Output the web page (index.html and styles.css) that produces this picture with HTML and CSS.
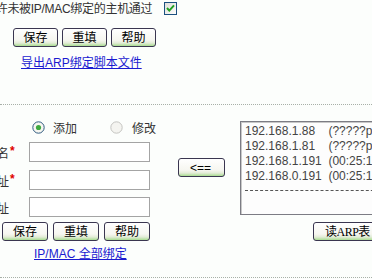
FILE: index.html
```html
<!DOCTYPE html>
<html>
<head>
<meta charset="utf-8">
<link rel="stylesheet" href="styles.css">
</head>
<body>
<div class="page">
  <div class="top">
    <div class="allow">
      <span class="allow-text">允许未被IP/MAC绑定的主机通过</span>
      <span class="chk"><svg width="13" height="13" viewBox="0 0 13 13"><defs><linearGradient id="cg" x1="0" y1="0" x2="1" y2="1"><stop offset="0" stop-color="#dcdcd6"/><stop offset="1" stop-color="#ffffff"/></linearGradient></defs><rect x="0.5" y="0.5" width="12" height="12" fill="url(#cg)" stroke="#1c5180"/><path d="M3 6 L5.3 8.6 L10 3.4" fill="none" stroke="#21a121" stroke-width="2"/></svg></span>
    </div>
    <div class="btns btns-top">
      <button class="btn">保存</button>
      <button class="btn">重填</button>
      <button class="btn">帮助</button>
    </div>
    <a class="link link-top" href="#">导出ARP绑定脚本文件</a>
  </div>
  <div class="lower">
    <div class="form">
      <div class="radios">
        <span class="radio"><svg width="13" height="13" viewBox="0 0 13 13"><circle cx="6.5" cy="6.5" r="5.7" fill="#f6f6f0" stroke="#2f5a80"/><circle cx="6.5" cy="6.5" r="2.6" fill="#3faa3f"/></svg></span>
        <span class="rlabel">添加</span>
        <span class="radio radio-off"><svg width="13" height="13" viewBox="0 0 13 13"><circle cx="6.5" cy="6.5" r="5.7" fill="#f4f4f0" stroke="#c4c4c0"/></svg></span>
        <span class="rlabel">修改</span>
      </div>
      <div class="field field-1"><div class="lbl"><span class="lt">主机名</span><span class="req">*</span></div><div class="inp"></div></div>
      <div class="field field-2"><div class="lbl"><span class="lt">IP地址</span><span class="req">*</span></div><div class="inp"></div></div>
      <div class="field field-3"><div class="lbl"><span class="lt">MAC地址</span></div><div class="inp"></div></div>
      <div class="btns btns-bottom">
        <button class="btn">保存</button>
        <button class="btn">重填</button>
        <button class="btn">帮助</button>
      </div>
      <a class="link link-bottom" href="#">IP/MAC 全部绑定</a>
    </div>
    <div class="mid">
      <button class="btn btn-arrow">&lt;==</button>
    </div>
    <div class="right">
      <div class="list">
        <div class="opt">192.168.1.88    (?????pc)</div>
        <div class="opt">192.168.1.81    (?????pc)</div>
        <div class="opt">192.168.1.191  (00:25:11:2a:3b:4c)</div>
        <div class="opt">192.168.0.191  (00:25:11:5d:6e:7f)</div>
        <div class="sep"></div>
      </div>
      <button class="btn btn-read">读ARP表</button>
    </div>
  </div>
  <div class="bottom-rule"></div>
</div>
</body>
</html>
```
FILE: styles.css
```css
html, body {
  margin: 0;
  padding: 0;
}
body {
  width: 372px;
  height: 279px;
  overflow: hidden;
  background: #fcfefc;
  font-family: "Liberation Sans", "Noto Sans CJK SC", sans-serif;
  font-size: 12px;
  color: #333;
}
.page {
  width: 372px;
  overflow: hidden;
}
.top {
  height: 104px;
  box-sizing: border-box;
}
.allow {
  display: flex;
  align-items: center;
  height: 17px;
  margin-left: -16px;
  white-space: nowrap;
}
.allow-text {
  line-height: 16px;
  letter-spacing: -0.3px;
}
.chk {
  display: flex;
  margin-left: 12px;
}
.btns {
  display: flex;
}
.btns-top {
  margin-top: 11px;
  padding-left: 13px;
  gap: 4px;
}
.btn {
  box-sizing: border-box;
  width: 45px;
  height: 19px;
  padding: 0;
  margin: 0;
  border: 1px solid #3a3650;
  border-radius: 3px;
  background: linear-gradient(#ffffff 0%, #f6f6f0 65%, #e4ecd8 82%, #a8dc90 100%);
  font-family: "Liberation Sans", "Noto Sans CJK SC", sans-serif;
  font-size: 12px;
  line-height: 16px;
  color: #000;
  text-align: center;
}
.link {
  display: block;
  width: max-content;
  line-height: 14px;
  color: #1a1ad0;
  text-decoration: underline;
}
.link-top {
  margin-top: 9px;
  margin-left: 21px;
}
.lower {
  display: flex;
  height: 173px;
  box-sizing: border-box;
  border-top: 1px dotted #a8b0a8;
}
.form {
  width: 172px;
  flex: none;
}
.radios {
  display: flex;
  align-items: center;
  height: 18px;
  margin-top: 13px;
  padding-left: 32px;
}
.radio {
  display: flex;
}
.rlabel {
  margin-left: 8px;
  color: #333;
}
.radio-off {
  margin-left: 33px;
}
.radio-off + .rlabel {
  margin-left: 9px;
}
.field {
  display: flex;
  align-items: center;
  height: 20px;
}
.field-1 { margin-top: 6px; }
.field-2 { margin-top: 8px; }
.field-3 { margin-top: 7px; }
.lbl {
  width: 29px;
  flex: none;
  display: flex;
  align-items: center;
  white-space: nowrap;
}
.lt {
  width: 9px;
  flex: none;
  display: flex;
  justify-content: flex-end;
  white-space: nowrap;
  color: #333;
}
.req {
  color: #e00000;
  font-size: 12px;
  font-weight: bold;
  margin-left: 1px;
  position: relative;
  top: -1px;
}
.inp {
  box-sizing: border-box;
  width: 121px;
  height: 20px;
  border: 1px solid #a4a4a4;
  background: #ffffff;
}
.btns-bottom {
  margin-top: 5px;
  padding-left: 2px;
  gap: 5px;
}
.btns-bottom .btn {
  width: 46px;
}
.link-bottom {
  margin-top: 6px;
  margin-left: 34px;
}
.mid {
  width: 68px;
  flex: none;
}
.btn-arrow {
  margin-top: 53px;
  margin-left: 6px;
  width: 47px;
  text-align: left;
  padding-left: 11px;
}
.right {
  flex: none;
  width: 160px;
}
.list {
  box-sizing: border-box;
  margin-top: 16px;
  width: 160px;
  height: 94px;
  border: 1px solid #7c7c84;
  box-shadow: inset 1px 1px 0 #c8c8c8;
  background: #fdfdfd;
  padding: 2px 0 0 4px;
  overflow: hidden;
}
.opt {
  line-height: 15px;
  white-space: pre;
  color: #444;
}
.sep {
  margin-top: 6px;
  border-top: 1px dashed #555;
}
.btn-read {
  margin-top: 7px;
  margin-left: 73px;
  width: 72px;
  text-align: left;
  padding-left: 11px;
  font-family: "Liberation Serif", "Noto Sans CJK SC", serif;
  font-size: 12px;
  letter-spacing: -0.5px;
}
.bottom-rule {
  border-top: 1px dotted #a8b0a8;
}
```
